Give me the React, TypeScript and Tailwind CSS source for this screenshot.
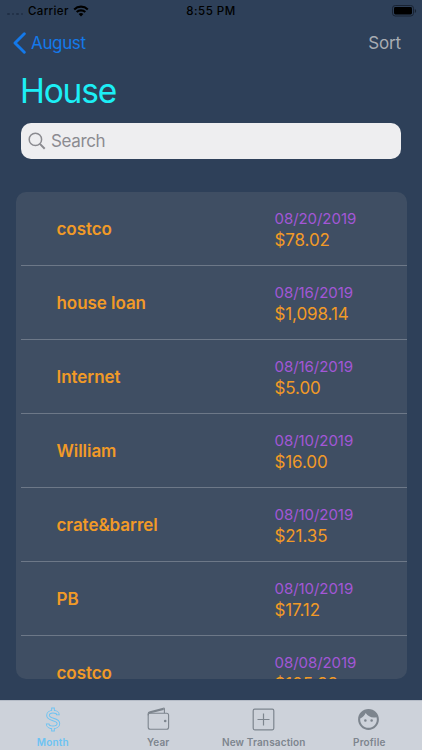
import React from 'react';
import { MdFace } from 'react-icons/md';

interface Transaction {
  name: string;
  date: string;
  amount: string;
}

const transactions: Transaction[] = [
  { name: 'costco', date: '08/20/2019', amount: '$78.02' },
  { name: 'house loan', date: '08/16/2019', amount: '$1,098.14' },
  { name: 'Internet', date: '08/16/2019', amount: '$5.00' },
  { name: 'William', date: '08/10/2019', amount: '$16.00' },
  { name: 'crate&barrel', date: '08/10/2019', amount: '$21.35' },
  { name: 'PB', date: '08/10/2019', amount: '$17.12' },
  { name: 'costco', date: '08/08/2019', amount: '$105.28' },
];

function DollarIcon() {
  const curve = 'M13 8.2C13 5.8 10.6 4.7 8 4.7S3 6 3 8.5c0 4.9 10.4 3 10.4 7.9 0 2.6-2.6 3.9-5.4 3.9s-5.4-1.2-5.4-3.8';
  return (
    <svg width="16" height="25" viewBox="0 0 16 25" fill="none">
      <g stroke="#6cc3f3" strokeWidth="3.6">
        <path d={curve} />
        <path d="M8 .6v4M8 20.4v4" />
      </g>
      <g stroke="#cdd2da" strokeWidth="1.7">
        <path d="M13 7.3C12.7 5.6 10.6 4.7 8 4.7S3 6 3 8.5c0 4.9 10.4 3 10.4 7.9 0 2.6-2.6 3.9-5.4 3.9s-5.2-1.2-5.4-3" />
        <path d="M8 1.5v3M8 20.5v3" />
      </g>
    </svg>
  );
}

function WalletIcon() {
  return (
    <svg className="mb-[2px]" width="23" height="23" viewBox="0 0 23 23" fill="none" stroke="#7d858e" strokeWidth="1.1" strokeLinejoin="round">
      <rect x="1.2" y="6.3" width="20.4" height="15.9" rx="2" />
      <path d="M1.2 8.2V6.6c0-.9.7-1.4 1.8-1.7L16.4 1.2c.7-.2 1 .1 1 .7v4.4M2.6 6l14-3.6" />
      <circle cx="18.2" cy="14" r="1.3" fill="#7d858e" stroke="none" />
    </svg>
  );
}

function PlusIcon() {
  return (
    <svg width="23" height="23" viewBox="0 0 23 23" fill="none" stroke="#7d858e" strokeWidth="1.2">
      <rect x="1.2" y="1.2" width="20.6" height="20.6" rx="1.5" />
      <path d="M11.5 5.5v12M5.5 11.5h12" />
    </svg>
  );
}

const tabs = [
  { label: 'Month', icon: <DollarIcon />, active: true },
  { label: 'Year', icon: <WalletIcon />, active: false },
  { label: 'New Transaction', icon: <PlusIcon />, active: false },
  { label: 'Profile', icon: <MdFace className="mr-px" size={25} color="#7d858e" />, active: false },
];

function StatusBar() {
  return (
    <div className="grid h-[21px] grid-cols-3 items-center text-[11.5px] font-medium leading-none tracking-[0.35px] text-black">
      <div className="flex items-center pl-[7px]">
        <div className="mt-[7px] mr-[5px] flex gap-[2px]">
          {[0, 1, 2, 3].map((dot) => (
            <span key={dot} className="h-[2.5px] w-[2.5px] rounded-full bg-[#202f46]" />
          ))}
        </div>
        <span className="pt-[2px]">Carrier</span>
        <svg className="ml-1" width="16" height="12" viewBox="0 0 16 12" fill="none" stroke="#000" strokeWidth="2.1">
          <path d="M1.2 4.4a9.7 9.7 0 0 1 13.6 0M3.7 7.1a6.1 6.1 0 0 1 8.6 0" />
          <path d="M8 11.6 5.6 9.1a3.4 3.4 0 0 1 4.8 0z" fill="#000" stroke="none" />
        </svg>
      </div>
      <div className="pt-[2px] text-center tracking-[0.5px]">8:55 PM</div>
      <div className="flex justify-end pr-[5px]">
        <svg width="26" height="12" viewBox="0 0 26 12">
          <rect x="1.5" y="0.5" width="21" height="10.5" rx="2.8" fill="none" stroke="#192333" />
          <rect x="3" y="2" width="18" height="7.5" rx="1.4" fill="#000" />
          <path d="M23.8 4v4c1.8-.7 1.8-3.3 0-4z" fill="#192333" />
        </svg>
      </div>
    </div>
  );
}

function TransactionRow({ name, date, amount }: Transaction) {
  return (
    <li className="ml-[5px] flex h-[74px] shrink-0 items-center border-b border-[#6d7888] pl-9">
      <span className="w-[218px] pt-[2px] text-[17px] font-semibold tracking-[-0.05px] text-[#f19a27]">{name}</span>
      <div className="pt-px">
        <div className="text-[15px] leading-[21px] tracking-[-0.05px] text-[#a357d7]">{date}</div>
        <div className="mt-px text-[17px] leading-[21px] tracking-[-0.1px] text-[#f19a27]">{amount}</div>
      </div>
    </li>
  );
}

export default function App() {
  return (
    <div className="flex h-[750px] w-[422px] flex-col overflow-hidden bg-[#2e4059] font-['Inter',sans-serif]">
      <StatusBar />

      <nav className="flex h-11 items-center justify-between pr-[21px] pl-[13px] text-[17px] tracking-[-0.35px]">
        <button className="flex items-center gap-[5px] text-[#1479ea]">
          <svg width="13" height="22" viewBox="0 0 13 22" fill="none" stroke="currentColor" strokeWidth="2.9" strokeLinecap="round" strokeLinejoin="round">
            <path d="M11.3 1.8 2 11l9.3 9.2" />
          </svg>
          <span className="pt-[2px]">August</span>
        </button>
        <button className="pt-[2px] tracking-[-0.15px] text-[#a8acb2]">Sort</button>
      </nav>

      <h1 className="h-[58px] pl-5 text-[33.5px] leading-[53px] tracking-[-1.2px] text-[#1ceff6]">House</h1>

      <div className="mx-[21px] flex h-9 items-center gap-[5px] rounded-[10px] bg-[#eeeef0] pl-[7px] text-[#8b8b90]">
        <svg width="18" height="18" viewBox="0 0 18 18" fill="none" stroke="currentColor" strokeWidth="1.5">
          <circle cx="7.4" cy="7.4" r="6.2" />
          <path d="m11.9 11.9 4.8 4.8" strokeWidth="2" />
        </svg>
        <span className="pt-px text-[17px] tracking-[-0.35px]">Search</span>
      </div>

      <ul className="mx-[15.5px] mt-[33px] flex h-[487px] flex-col overflow-hidden rounded-[10px] bg-[#3f4e63]">
        {transactions.map((item, i) => (
          <TransactionRow key={i} {...item} />
        ))}
      </ul>

      <footer className="mt-auto grid h-[50px] grid-cols-4 border-t border-[#b5bcc7] bg-[#cdd2da]">
        {tabs.map(({ label, icon, active }) => (
          <div key={label} className="flex flex-col items-center">
            <div className="flex h-9 items-center justify-center">{icon}</div>
            <span className={`text-[10px] leading-[10px] font-semibold tracking-[0.15px] whitespace-nowrap ${active ? 'text-[#6cc3f3]' : 'text-[#7d858e]'}`}>
              {label}
            </span>
          </div>
        ))}
      </footer>
    </div>
  );
}
